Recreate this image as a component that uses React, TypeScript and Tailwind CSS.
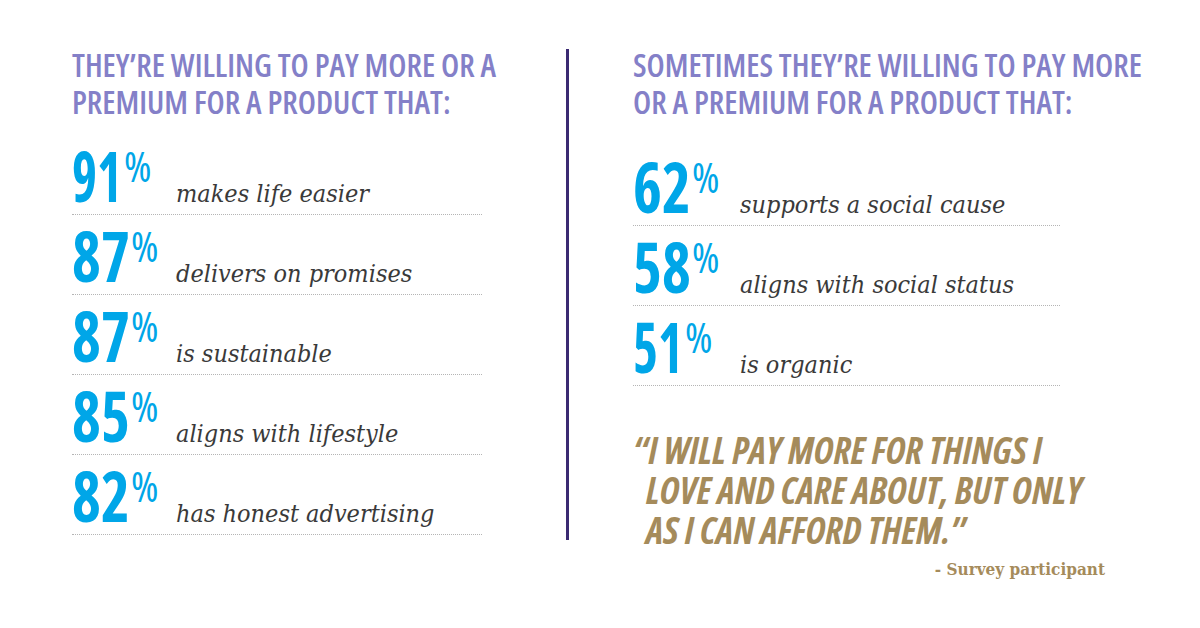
const leftStats = [
  { value: "91", label: "makes life easier" },
  { value: "87", label: "delivers on promises" },
  { value: "87", label: "is sustainable" },
  { value: "85", label: "aligns with lifestyle" },
  { value: "82", label: "has honest advertising" },
];

const rightStats = [
  { value: "62", label: "supports a social cause" },
  { value: "58", label: "aligns with social status" },
  { value: "51", label: "is organic" },
];

function Heading({ lines }: { lines: string[] }) {
  return (
    <h2 className="whitespace-nowrap font-['Open_Sans',sans-serif] font-stretch-[75%] text-[32px] font-semibold uppercase leading-[37px] text-[#8480c8]">
      {lines.map((l, i) => (
        <div key={i}>{l}</div>
      ))}
    </h2>
  );
}

function StatRow({
  value,
  label,
  numWidth,
  lineWidth,
}: {
  value: string;
  label: string;
  numWidth: string;
  lineWidth: string;
}) {
  // the "1" is a narrow figure in the original type, so those numbers sit tighter
  const narrow = value.includes("1");
  return (
    <div
      className={`flex h-[80px] items-baseline border-b border-dotted border-[#b5b5b5] pt-[5px] ${lineWidth}`}
    >
      <div
        className={`shrink-0 whitespace-nowrap font-['Open_Sans',sans-serif] font-stretch-[75%] text-[70px] leading-none text-[#00a6e8] ${numWidth}`}
      >
        <span className={`inline-block ${narrow ? "w-[52px]" : "w-[59px]"}`}>
          <span
            className={`inline-block origin-left font-bold ${narrow ? "scale-x-[0.76]" : "scale-x-[0.88]"}`}
          >
            {value}
          </span>
        </span>
        <span className="relative top-[5px] align-top font-stretch-[87.5%] text-[42px] font-medium leading-none">
          %
        </span>
      </div>
      <span className="whitespace-nowrap font-['DejaVu_Serif_Condensed','DejaVu_Serif',serif] text-[25px] italic text-[#3a3a3a]">
        {label}
      </span>
    </div>
  );
}

export default function App() {
  return (
    <div className="flex h-[628px] w-[1200px] overflow-hidden bg-white pl-[72px]">
      <div className="w-[494px] shrink-0 pt-[46px]">
        <Heading lines={["They’re willing to pay more or a", "premium for a product that:"]} />
        <div className="mt-[15px]">
          {leftStats.map((s, i) => (
            <StatRow key={i} {...s} numWidth="w-[104px]" lineWidth="w-[410px]" />
          ))}
        </div>
      </div>

      <div className="mt-[49px] h-[491px] w-[3px] shrink-0 bg-[#3b2a72]" />

      <div className="w-[631px] shrink-0 pl-[64px] pt-[46px]">
        <Heading lines={["Sometimes they’re willing to pay more", "or a premium for a product that:"]} />
        <div className="mt-[26px]">
          {rightStats.map((s, i) => (
            <StatRow key={i} {...s} numWidth="w-[107px]" lineWidth="w-[427px]" />
          ))}
        </div>

        <blockquote className="mt-[44px] whitespace-nowrap pl-[13px] -indent-[13px] font-['Open_Sans',sans-serif] font-stretch-[75%] text-[37px] font-bold italic uppercase leading-[40px] text-[#a58b5b]">
          “I will pay more for things I
          <br />
          love and care about, but only
          <br />
          as I can afford them.”
        </blockquote>
        <p className="mt-[7px] pr-[95px] text-right font-['DejaVu_Serif_Condensed','DejaVu_Serif',serif] text-[17px] font-bold leading-[24px] text-[#a58b5b]">
          - Survey participant
        </p>
      </div>
    </div>
  );
}
